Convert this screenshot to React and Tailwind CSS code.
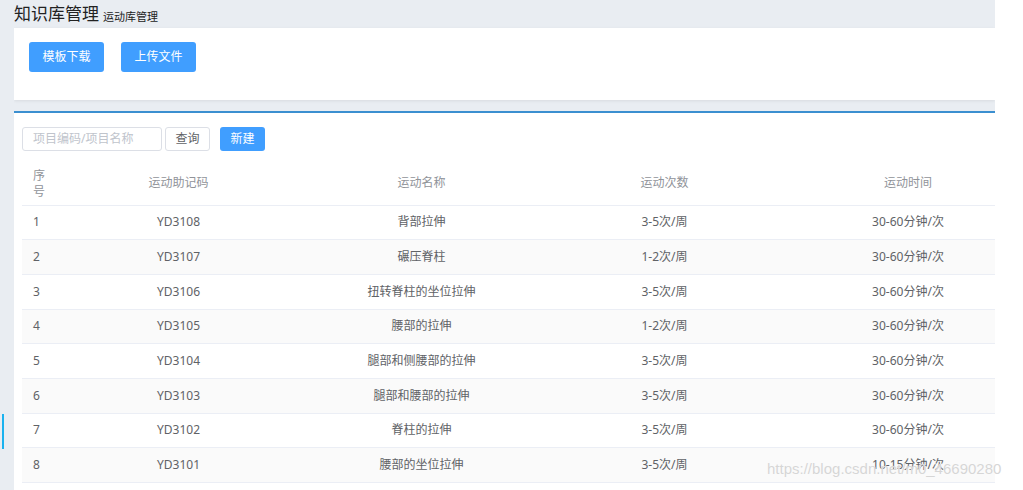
import React from 'react';

const rows = [
  ['1', 'YD3108', '背部拉伸', '3-5次/周', '30-60分钟/次'],
  ['2', 'YD3107', '碾压脊柱', '1-2次/周', '30-60分钟/次'],
  ['3', 'YD3106', '扭转脊柱的坐位拉伸', '3-5次/周', '30-60分钟/次'],
  ['4', 'YD3105', '腰部的拉伸', '1-2次/周', '30-60分钟/次'],
  ['5', 'YD3104', '腿部和侧腰部的拉伸', '3-5次/周', '30-60分钟/次'],
  ['6', 'YD3103', '腿部和腰部的拉伸', '3-5次/周', '30-60分钟/次'],
  ['7', 'YD3102', '脊柱的拉伸', '3-5次/周', '30-60分钟/次'],
  ['8', 'YD3101', '腰部的坐位拉伸', '3-5次/周', '10-15分钟/次'],
];

const font = { fontFamily: '"Noto Sans", "Noto Sans CJK SC", sans-serif' };

export default function App() {
  return (
    <div className="relative flex h-[490px] w-[1023px] overflow-hidden bg-white" style={font}>
      {/* left rail */}
      <div className="relative w-[14px] shrink-0 bg-[#e9edf2]">
        <div className="absolute left-[2px] top-[414px] h-[35px] w-[2px] bg-[#1ab2ef]" />
      </div>

      <main className="flex w-[981px] shrink-0 flex-col overflow-hidden bg-[#e9edf2]">
        <div className="flex h-[28px] items-end gap-[4px] pb-[2px]">
          <h1 className="text-[17px] leading-[24px] text-[#222]">知识库管理</h1>
          <span className="mb-[1px] text-[11px] leading-[16px] text-[#222]">运动库管理</span>
        </div>

        <div className="flex h-[72px] items-start gap-[17px] bg-white px-[15px] pt-[14px] shadow-[0_1px_3px_rgba(0,0,0,0.08)]">
          <button className="h-[30px] w-[75px] rounded-[3px] bg-[#409eff] text-[12px] text-white">模板下载</button>
          <button className="h-[30px] w-[75px] rounded-[3px] bg-[#409eff] text-[12px] text-white">上传文件</button>
        </div>

        <div className="h-[11px] shrink-0" />
        <div className="h-[2px] shrink-0 bg-[#3b8fd0]" />

        <div className="flex-1 bg-white pl-[8px] pt-[14px]">
          <div className="flex items-center">
            <div className="flex h-[24px] w-[140px] items-center rounded-[3px] border border-[#dcdfe6] px-[10px] text-[12px] text-[#c0c4cc]">
              项目编码/项目名称
            </div>
            <button className="ml-[3px] h-[24px] w-[45px] rounded-[3px] border border-[#dcdfe6] bg-white text-[12px] text-[#606266]">查询</button>
            <button className="ml-[10px] h-[24px] w-[45px] rounded-[3px] bg-[#409eff] text-[12px] text-white">新建</button>
          </div>

          <table className="mt-[11px] w-[1008px] table-fixed border-collapse text-[12px]">
            <colgroup>
              <col className="w-[35px]" />
              <col className="w-[243px]" />
              <col className="w-[243px]" />
              <col className="w-[243px]" />
              <col className="w-[244px]" />
            </colgroup>
            <thead>
              <tr className="h-[43px] border-b border-[#ebeef5] text-[#909399]">
                <th className="px-[11px] pt-[1px] text-left font-normal leading-[16px]">序号</th>
                <th className="font-normal">运动助记码</th>
                <th className="font-normal">运动名称</th>
                <th className="font-normal">运动次数</th>
                <th className="font-normal">运动时间</th>
              </tr>
            </thead>
            <tbody className="text-[#606266]">
              {rows.map((r, i) => (
                <tr key={r[0]} className={`h-[34.7px] border-b border-[#ebeef5] ${i % 2 === 1 ? 'bg-[#fafafa]' : 'bg-white'}`}>
                  <td className="px-[11px] text-left">{r[0]}</td>
                  <td className="text-center">{r[1]}</td>
                  <td className="text-center">{r[2]}</td>
                  <td className="text-center">{r[3]}</td>
                  <td className="text-center">{r[4]}</td>
                </tr>
              ))}
            </tbody>
          </table>
        </div>
      </main>

      <div className="flex-1 bg-white" />

      <div className="pointer-events-none absolute left-[767px] top-[458px] text-[15px] text-[#d6d6d6] [text-shadow:0_0_1px_#fff]" style={{ fontFamily: '"Liberation Sans", Arial, sans-serif' }}>
        https://blog.csdn.net/m0_46690280
      </div>
    </div>
  );
}
